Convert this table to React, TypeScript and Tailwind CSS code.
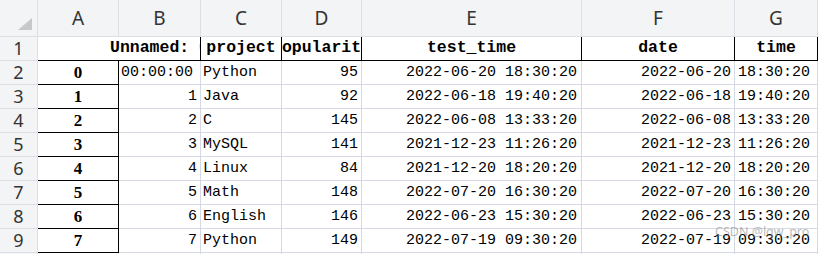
const rows = [
  ["0", "00:00:00", "Python", "95", "2022-06-20 18:30:20", "2022-06-20", "18:30:20"],
  ["1", "1", "Java", "92", "2022-06-18 19:40:20", "2022-06-18", "19:40:20"],
  ["2", "2", "C", "145", "2022-06-08 13:33:20", "2022-06-08", "13:33:20"],
  ["3", "3", "MySQL", "141", "2021-12-23 11:26:20", "2021-12-23", "11:26:20"],
  ["4", "4", "Linux", "84", "2021-12-20 18:20:20", "2021-12-20", "18:20:20"],
  ["5", "5", "Math", "148", "2022-07-20 16:30:20", "2022-07-20", "16:30:20"],
  ["6", "6", "English", "146", "2022-06-23 15:30:20", "2022-06-23", "15:30:20"],
  ["7", "7", "Python", "149", "2022-07-19 09:30:20", "2022-07-19", "09:30:20"],
];

const letters = ["A", "B", "C", "D", "E", "F", "G"];

const mono = "font-['Liberation_Mono',monospace]";
const grid = "border-r border-b border-[#d5d9e3]";
const hdr = "bg-[#f3f4f6] border-r border-b border-[#dcdfe6] flex items-center justify-center text-[#333] font-['Noto_Sans',sans-serif]";

function HeadCell({ text }: { text: string }) {
  return (
    <div className="h-[24px] border-r border-b border-black flex items-center justify-center overflow-hidden whitespace-nowrap">
      <span className={`${mono} font-bold text-[16.5px] text-black`}>{text}</span>
    </div>
  );
}

export default function App() {
  return (
    <div className="relative w-[818px] h-[254px] overflow-hidden bg-white">
      <div className="grid grid-cols-[38px_81px_82px_81px_80px_220px_153px_83px]">
        {/* column letters */}
        <div className={`${hdr} h-[37px] relative`}>
          <div className="absolute left-[18px] top-[18px] w-0 h-0 border-l-[14px] border-l-transparent border-b-[12px] border-b-[#c8c8c8]" />
        </div>
        {letters.map((l) => (
          <div key={l} className={`${hdr} h-[37px] text-[19px] pt-[1px]`}>
            {l}
          </div>
        ))}

        {/* row 1 */}
        <div className={`${hdr} h-[24px] text-[18px]`}>1</div>
        <div className="col-span-2 h-[24px] flex border-r border-b border-black overflow-hidden whitespace-nowrap">
          <div className="w-[81px] shrink-0" />
          <div className="w-[81px] shrink-0 flex items-center justify-center">
            <span className={`${mono} font-bold text-[16.5px] text-black`}>Unnamed: 0</span>
          </div>
        </div>
        <HeadCell text="project" />
        <HeadCell text="popularity" />
        <HeadCell text="test_time" />
        <HeadCell text="date" />
        <HeadCell text="time" />

        {rows.map((r, i) => (
          <div key={i} className="contents">
            <div className={`${hdr} h-[24px] text-[18px]`}>{i + 2}</div>
            <div className="h-[24px] border-r border-b border-black flex items-center justify-center pt-[1px] font-['Liberation_Serif',serif] font-bold text-[17px] text-black">
              {r[0]}
            </div>
            <div className={`${grid} h-[24px] flex items-center pt-[1px] ${i === 0 ? "pl-[2px]" : "justify-end pr-[3px]"} ${mono} text-[15px] text-black`}>
              {r[1]}
            </div>
            <div className={`${grid} h-[24px] flex items-center pt-[1px] pl-[2px] ${mono} text-[15px] text-black whitespace-nowrap`}>
              {r[2]}
            </div>
            <div className={`${grid} h-[24px] flex items-center pt-[1px] justify-end pr-[3px] ${mono} text-[15px] text-black`}>
              {r[3]}
            </div>
            <div className={`${grid} h-[24px] flex items-center pt-[1px] justify-end pr-[4px] ${mono} text-[15px] text-black whitespace-nowrap`}>
              {r[4]}
            </div>
            <div className={`${grid} h-[24px] flex items-center pt-[1px] justify-end pr-[3px] ${mono} text-[15px] text-black`}>
              {r[5]}
            </div>
            <div className={`${grid} h-[24px] flex items-center pt-[1px] pl-[3px] ${mono} text-[15px] text-black`}>
              {r[6]}
            </div>
          </div>
        ))}

        {/* partial next row */}
        <div className={`${hdr} h-[24px]`} />
        {letters.map((l) => (
          <div key={l} className={`${grid} h-[24px]`} />
        ))}
      </div>

      <div className="absolute left-[715px] top-[223px] text-[12.5px] text-[#8a8a8a]/60 font-['Noto_Sans',sans-serif] whitespace-nowrap">
        CSDN @lqw_pro
      </div>
    </div>
  );
}
